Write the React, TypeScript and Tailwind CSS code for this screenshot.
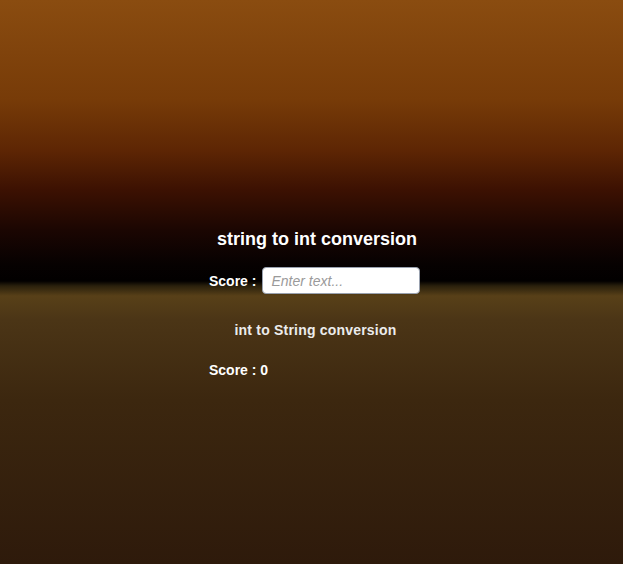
export default function App() {
  return (
    <main
      className="w-[623px] h-[564px] overflow-hidden text-white bg-[linear-gradient(to_bottom,#8a4c10_0px,#773b08_100px,#5e2604_150px,#3c1102_190px,#1b0602_230px,#060101_265px,#020000_281px,#2a200c_286px,#584018_296px,#4b3516_320px,#3c270f_400px,#2e1a0b_564px)]"
      style={{ fontFamily: '"Liberation Sans", Arial, sans-serif' }}
    >
      <div className="flex flex-col pt-[229px] pl-[209px] w-[425px]">
        {/* string -> int */}
        <h1 className="w-[216px] text-center text-[18px] leading-[21px] font-bold">
          string to int conversion
        </h1>
        <div className="flex items-center mt-[17px] h-[27px]">
          <span className="text-[14px] font-bold leading-none">Score :</span>
          <input
            type="text"
            placeholder="Enter text..."
            className="ml-[6px] w-[158px] h-[27px] rounded-[4px] bg-white border border-gray-400 px-[8px] text-[14px] text-gray-800 italic placeholder:text-[#9a9a9a] outline-none"
          />
        </div>

        {/* int -> string */}
        <h2 className="w-[213px] text-center text-[14px] leading-[16px] font-bold tracking-[0.2px] text-[#ececec] mt-[28px]">
          int to String conversion
        </h2>
        <p className="text-[14px] leading-[16px] font-bold mt-[24px]">Score : 0</p>
      </div>
    </main>
  );
}
